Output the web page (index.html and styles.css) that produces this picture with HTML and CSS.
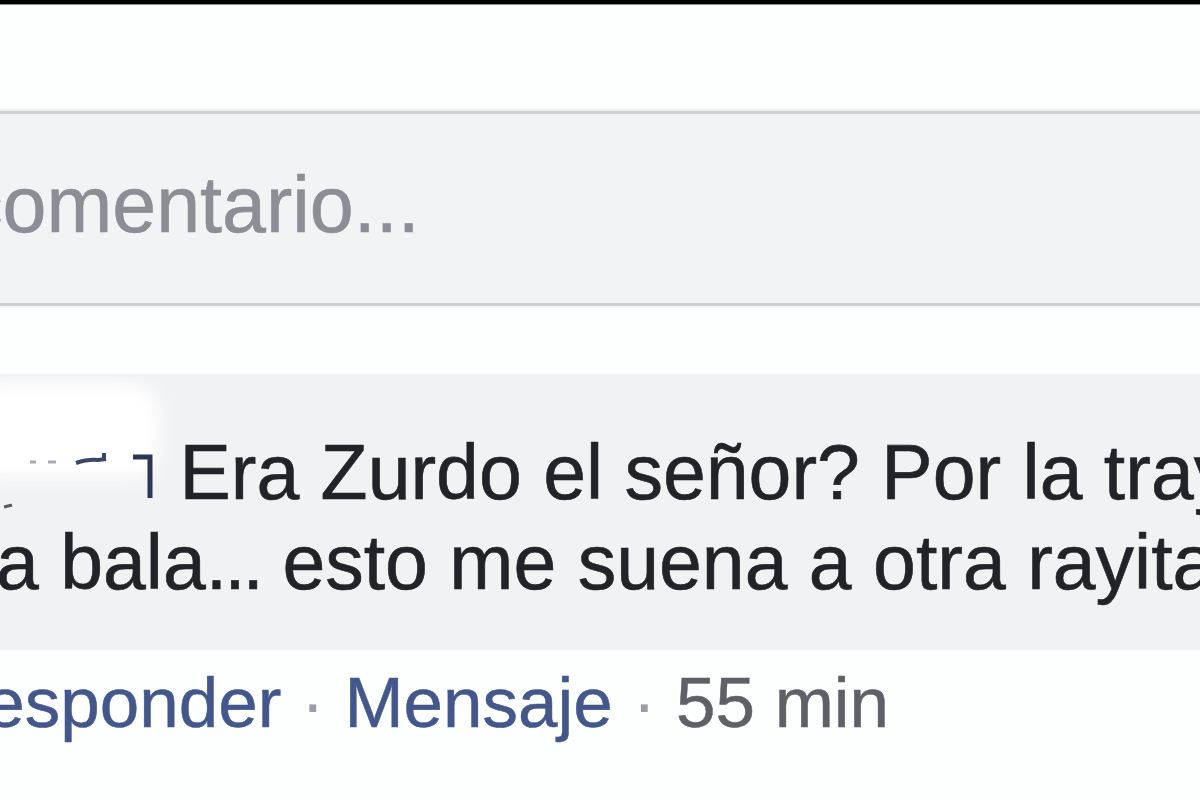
FILE: index.html
```html
<!DOCTYPE html>
<html lang="es">
<head>
  <meta charset="UTF-8">
  <title>Comentarios</title>
  <meta name="viewport" content="width=device-width, initial-scale=1.0">
  <link rel="stylesheet" href="styles.css">
</head>
<body>
  <div class="top-bar"></div>

  <div class="composer">
    <span class="placeholder">comentario...</span>
  </div>

  <div class="comment">
    <p class="comment-line">
      <span class="author">
        <!-- the author's name is smudged out in the screenshot -->
        <svg class="smudge" width="185" height="140" viewBox="0 0 185 140">
          <defs>
            <filter id="soft" x="-30%" y="-30%" width="160%" height="160%">
              <feGaussianBlur stdDeviation="9"/>
            </filter>
          </defs>
          <rect x="-30" y="8" width="188" height="92" rx="24" fill="#ffffff" filter="url(#soft)"/>
          <rect x="-20" y="18" width="165" height="72" rx="14" fill="#ffffff" opacity="0.85" filter="url(#soft)"/>
          <path d="M30 85 h6 M48 85 h8" stroke="#a7abb3" stroke-width="3"/>
          <path d="M76 86 q12 -4 22 -3 l8 -1 M104 83 v-7" stroke="#3a4668" stroke-width="4" fill="none"/>
          <path d="M133 80 h17 v41" stroke="#2c3757" stroke-width="5" fill="none"/>
          <path d="M4 130 l8 -2" stroke="#555b66" stroke-width="3"/>
        </svg>
      </span> Era Zurdo el señor? Por la trayectoria de</p>
    <p class="comment-line wrap">a bala<span class="dots">...</span> esto me suena a otra rayita más</p>
  </div>

  <div class="actions">
    <a href="#" class="action-link">Responder</a>
    <span class="sep">·</span>
    <a href="#" class="action-link">Mensaje</a>
    <span class="sep">·</span>
    <span class="time">55 min</span>
  </div>
</body>
</html>
```

FILE: styles.css
```css
* {
  margin: 0;
  padding: 0;
  box-sizing: border-box;
}

html, body {
  overflow: hidden;
}

body {
  font-family: "Liberation Sans", Arial, sans-serif;
  background: #fdfefe;
  width: 1200px;
  height: 800px;
}

.top-bar {
  height: 5px;
  background: #000;
  border-bottom: 1px solid #8c8c8c;
}

.composer {
  margin-top: 106px;
  height: 195px;
  background: #f2f3f5;
  border-top: 3px solid #cdd0d4;
  border-bottom: 3px solid #cdd0d4;
  box-shadow: 0 -2px 2px #eceef0, 0 2px 2px #f3f5f7;
  padding-top: 52px;
  white-space: nowrap;
}

.placeholder {
  display: block;
  margin-left: -37px;
  font-size: 79px;
  line-height: 78px;
  color: #8b8e95;
  -webkit-text-stroke: 0.6px #8b8e95;
}

.comment {
  margin-top: 68px;
  background: #f1f2f4;
  padding: 53px 0 43px;
  white-space: nowrap;
}

.comment-line {
  font-size: 77px;
  line-height: 90px;
  color: #212328;
  -webkit-text-stroke: 0.6px #212328;
}

.comment-line.wrap {
  margin-left: -4px;
}

.dots {
  letter-spacing: -3px;
}

.author {
  display: inline-block;
  position: relative;
  width: 158px;
  height: 90px;
  vertical-align: top;
}

.smudge {
  position: absolute;
  left: 0;
  top: -50px;
}

.actions {
  margin-top: 18px;
  margin-left: -66px;
  font-size: 71px;
  line-height: 70px;
  white-space: nowrap;
}

.action-link {
  color: #44578a;
  text-decoration: none;
  -webkit-text-stroke: 0.5px #44578a;
}

.sep {
  color: #9a9ea5;
}

.time {
  color: #5d6066;
  -webkit-text-stroke: 0.5px #5d6066;
}
```
